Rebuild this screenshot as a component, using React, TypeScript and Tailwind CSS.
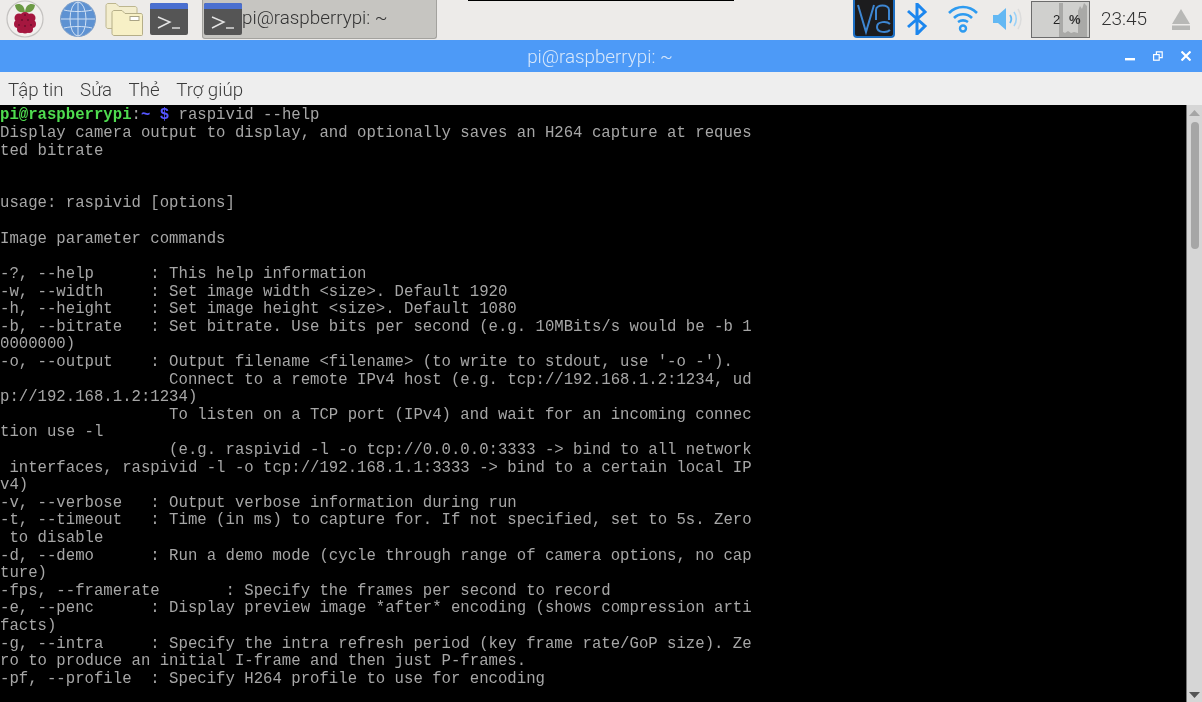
import React from 'react';

const lines = [
  'Display camera output to display, and optionally saves an H264 capture at reques',
  'ted bitrate',
  '',
  '',
  'usage: raspivid [options]',
  '',
  'Image parameter commands',
  '',
  '-?, --help      : This help information',
  '-w, --width     : Set image width <size>. Default 1920',
  '-h, --height    : Set image height <size>. Default 1080',
  '-b, --bitrate   : Set bitrate. Use bits per second (e.g. 10MBits/s would be -b 1',
  '0000000)',
  '-o, --output    : Output filename <filename> (to write to stdout, use \'-o -\').',
  '                  Connect to a remote IPv4 host (e.g. tcp://192.168.1.2:1234, ud',
  'p://192.168.1.2:1234)',
  '                  To listen on a TCP port (IPv4) and wait for an incoming connec',
  'tion use -l',
  '                  (e.g. raspivid -l -o tcp://0.0.0.0:3333 -> bind to all network',
  ' interfaces, raspivid -l -o tcp://192.168.1.1:3333 -> bind to a certain local IP',
  'v4)',
  '-v, --verbose   : Output verbose information during run',
  '-t, --timeout   : Time (in ms) to capture for. If not specified, set to 5s. Zero',
  ' to disable',
  '-d, --demo      : Run a demo mode (cycle through range of camera options, no cap',
  'ture)',
  '-fps, --framerate       : Specify the frames per second to record',
  '-e, --penc      : Display preview image *after* encoding (shows compression arti',
  'facts)',
  '-g, --intra     : Specify the intra refresh period (key frame rate/GoP size). Ze',
  'ro to produce an initial I-frame and then just P-frames.',
  '-pf, --profile  : Specify H264 profile to use for encoding',
];

const menus = ['Tập tin', 'Sửa', 'Thẻ', 'Trợ giúp'];

const RaspberryIcon = () => (
  <svg width="38" height="38" viewBox="0 0 38 38">
    <circle cx="19" cy="19" r="18" fill="#f1efed" stroke="#c4c2c0" strokeWidth="1.2" />
    <path d="M9 5c4-2 9-1 10 7-4 1-9 0-10-7zM29 5c-4-2-9-1-10 7 4 1 9 0 10-7z" fill="#6c9a45" />
    <g fill="#a5173f">
      <circle cx="19" cy="17" r="5" /><circle cx="13" cy="18" r="4.5" /><circle cx="25" cy="18" r="4.5" />
      <circle cx="12" cy="24" r="4" /><circle cx="26" cy="24" r="4" /><circle cx="19" cy="23" r="5" />
      <circle cx="15" cy="29" r="4" /><circle cx="23" cy="29" r="4" /><circle cx="19" cy="30" r="3.5" />
    </g>
    <g fill="#6f0f2c">
      <circle cx="16" cy="20" r="1" /><circle cx="22" cy="20" r="1" /><circle cx="13" cy="25" r="1" />
      <circle cx="25" cy="25" r="1" /><circle cx="19" cy="26" r="1" /><circle cx="19" cy="15" r="1" />
    </g>
  </svg>
);

const GlobeIcon = () => (
  <svg width="36" height="36" viewBox="0 0 36 36">
    <circle cx="18" cy="18" r="17.5" fill="#5e92d2" stroke="#7f9fc8" />
    <g fill="none" stroke="#cfe0f4" strokeWidth="1">
      <ellipse cx="18" cy="18" rx="8" ry="17" />
      <path d="M18 1v34M1 18h34M4 9c8 2 20 2 28 0M4 27c8-2 20-2 28 0" />
    </g>
  </svg>
);

const FolderIcon = () => (
  <svg width="38" height="33" viewBox="0 0 38 33">
    <path d="M1 2.500c0-1 1-2 2-2h8l3 3h16c1 0 2 1 2 2v20H3c-1 0-2-1-2-2z" fill="#f3edcd" stroke="#bdb68f" />
    <path d="M7 9.500c0-1 1-2 2-2h8l3 3h16c1 0 1.500 1 1.500 2v19c0 1-.5 1-1.500 1H9c-1 0-2-1-2-2z" fill="#f7f0c6" stroke="#b5ae88" />
    <rect x="25" y="13.500" width="9" height="4" fill="#fff" stroke="#a9a385" />
  </svg>
);

const TerminalIcon = () => (
  <svg width="38" height="32" viewBox="0 0 38 32">
    <rect width="38" height="32" rx="2" fill="#555555" />
    <path d="M0 2a2 2 0 0 1 2-2h34a2 2 0 0 1 2 2v4H0z" fill="#4a6fd0" />
    <path d="M8 14l12 5-12 6" fill="none" stroke="#e4e4e4" strokeWidth="1.4" />
    <path d="M22 25h8" stroke="#e4e4e4" strokeWidth="1.4" />
  </svg>
);

const VncIcon = () => (
  <div className="h-[38px] w-[42px] shrink-0 rounded-b-sm border-2 border-t-0 border-[#1d6fc4] bg-[#1c1c1e]">
    <svg width="38" height="36" viewBox="0 0 38 36" fill="none" stroke="#3d86d2" strokeWidth="2">
      <path d="M3 5l8 27 8-27" />
      <path d="M21 20V10c0-6 13-6 13 0v10" />
      <path d="M35 24c-3-3-13-3-13 3s10 6 13 3" />
    </svg>
  </div>
);

const BluetoothIcon = () => (
  <svg width="22" height="32" viewBox="0 0 22 32" fill="none" stroke="#1c86ee" strokeWidth="3">
    <path d="M2 8l17 15-8 8V1l8 8L2 24" />
  </svg>
);

const WifiIcon = () => (
  <svg width="32" height="28" viewBox="0 0 32 28" fill="none" stroke="#2e9bf0" strokeWidth="2.6">
    <path d="M2 8c8-8 20-8 28 0" />
    <path d="M7 13c5-5 13-5 18 0" />
    <path d="M11 17c3-2 7-2 10 0" />
    <circle cx="16" cy="23.500" r="3" strokeWidth="2.4" />
  </svg>
);

const VolumeIcon = () => (
  <svg width="30" height="24" viewBox="0 0 30 24" fill="none">
    <path d="M1 8h5l8-7v22l-8-7H1z" fill="#63b8f3" />
    <path d="M18 8c2 3 2 5 0 8" stroke="#63b8f3" strokeWidth="1.8" />
    <path d="M22 5c3 4 3 10 0 14" stroke="#9dd2f7" strokeWidth="1.6" />
    <path d="M26 2c4 6 4 14 0 20" stroke="#dcdcdc" strokeWidth="1.5" />
  </svg>
);

const CpuMonitor = () => (
  <div className="relative h-[37px] w-[59px] shrink-0 border border-[#6c6c6c] bg-[#d0d0ce]">
    <svg className="absolute inset-0" width="57" height="35" viewBox="0 0 57 35" fill="#a9a9a7">
      <path d="M27 35V1h4v29l2 1 3-2 3 2 3-1 4 1V9l2-5 2 3 2-6 3 3v31z" />
    </svg>
    <span className="absolute left-[21px] top-[10px] text-[13px] leading-4 text-[#222] [font-family:'Liberation_Sans',sans-serif]">2</span>
    <span className="absolute left-[37px] top-[10px] text-[13px] font-bold leading-4 text-[#333] [font-family:'Liberation_Sans',sans-serif]">%</span>
  </div>
);

const EjectIcon = () => (
  <svg width="20" height="21" viewBox="0 0 20 21" fill="#b8b8b6">
    <path d="M10 0l9 15H1z" />
    <rect x="1" y="16.500" width="18" height="4.500" />
  </svg>
);

export default function App() {
  return (
    <div className="relative flex h-[702px] w-[1202px] flex-col overflow-hidden bg-[#eeeeee] blur-[0.35px] [font-family:Roboto,sans-serif]">
      <div className="absolute left-[468px] top-0 h-px w-[266px] bg-black" />

      {/* top panel */}
      <div className="flex h-[40px] items-center bg-[#edebe9] pb-[2px] pl-[6px]">
        <RaspberryIcon />
        <div className="ml-[16px]"><GlobeIcon /></div>
        <div className="ml-[9px]"><FolderIcon /></div>
        <div className="ml-[7px]"><TerminalIcon /></div>
        <div className="ml-[14px] flex h-[39px] w-[235px] items-center self-start rounded-b-[3px] border border-t-0 border-[#a3a29e] bg-[#c6c5c1] pb-px pl-px">
          <TerminalIcon />
          <span className="text-[18.8px] font-light leading-none text-[#333]">pi@raspberrypi: ~</span>
        </div>
        <div className="ml-auto flex h-full items-center">
          <VncIcon />
          <div className="ml-[11px]"><BluetoothIcon /></div>
          <div className="ml-[19px]"><WifiIcon /></div>
          <div className="ml-[13px]"><VolumeIcon /></div>
          <div className="ml-[9px]"><CpuMonitor /></div>
          <span className="ml-[11px] w-[46px] text-[19px] font-light text-[#333]">23:45</span>
          <div className="ml-[24px] mr-[11px]"><EjectIcon /></div>
        </div>
      </div>

      {/* title bar */}
      <div className="relative flex h-[32px] items-center justify-center bg-[#4d9af7] pr-[2px] pt-[2px]">
        <span className="text-[18.8px] font-light text-[#d8e8fb]">pi@raspberrypi: ~</span>
        <div className="absolute right-[11px] top-0 flex h-full items-center gap-[18px]">
          <svg width="10" height="10" viewBox="0 0 10 10"><rect x="0" y="7" width="10" height="2.400" fill="#fff" /></svg>
          <svg width="10" height="10" viewBox="0 0 10 10" fill="none" stroke="#fff" strokeWidth="1.200">
            <rect x="0.600" y="3.600" width="5.600" height="5.600" />
            <path d="M3.400 3.400V0.800h5.800v5.800H6.400" />
          </svg>
          <svg width="10" height="10" viewBox="0 0 10 10" stroke="#fff" strokeWidth="2.200"><path d="M0.500 0.500l9 9M9.500 0.500l-9 9" /></svg>
        </div>
      </div>

      {/* menu bar */}
      <div className="flex h-[33px] items-center gap-[16.5px] bg-[#eeeeee] pl-[8px] pt-[3px] text-[18.7px] font-light text-[#3c3c3c]">
        {menus.map((m) => (
          <span key={m}>{m}</span>
        ))}
      </div>

      {/* terminal */}
      <div className="flex min-h-0 flex-1">
        <div className="min-w-0 flex-1 overflow-hidden bg-black pt-[2.4px] text-[15.67px] leading-[17.62px] whitespace-pre text-[#a6a6a6] [font-family:'Liberation_Mono',monospace]">
          <div>
            <span className="font-bold text-[#4fdc4f]">pi@raspberrypi</span>
            <span>:</span>
            <span className="font-bold text-[#5555ff]">~ $</span>
            <span> raspivid --help</span>
          </div>
          {lines.map((l, i) => (
            <div key={i} className="h-[17.62px]">{l}</div>
          ))}
        </div>
        <div className="flex w-[16px] shrink-0 flex-col items-center border-l border-[#777] bg-[#d6d6d6] pt-[5px]">
          <svg width="11" height="6" viewBox="0 0 11 6" fill="#a5a5a5"><path d="M5.500 0L11 6H0z" /></svg>
          <div className="mt-[6px] h-[127px] w-[8px] rounded-full bg-[#a6a6a6]" />
          <svg className="mb-[4px] mt-auto" width="11" height="6" viewBox="0 0 11 6" fill="#555"><path d="M0 0h11L5.500 6z" /></svg>
        </div>
      </div>
    </div>
  );
}
